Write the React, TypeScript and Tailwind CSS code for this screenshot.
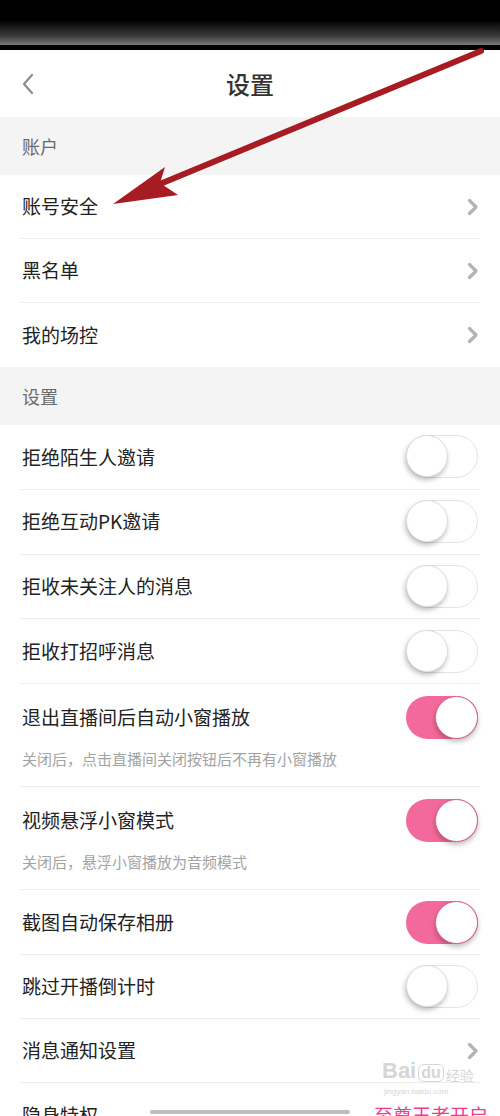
import React from 'react'

const font = { fontFamily: '"Noto Sans CJK SC", "Noto Sans", sans-serif' }

function Chevron() {
  return (
    <svg width="12" height="18" viewBox="0 0 12 18" className="mr-[1px]">
      <path d="M2.5 2.5 L9 9 L2.5 15.5" fill="none" stroke="#b3b3b3" strokeWidth="3.2" strokeLinecap="round" strokeLinejoin="round" />
    </svg>
  )
}

function Toggle({ on }: { on: boolean }) {
  if (on) {
    return (
      <div className="relative w-[72px] h-[43px] rounded-full bg-[#f4699b] mr-[2px]">
        <div className="absolute right-0 top-0 w-[43px] h-[43px] rounded-full bg-white border-[1.5px] border-[#d4638a] shadow-[0_3px_5px_rgba(0,0,0,0.25)]" />
      </div>
    )
  }
  return (
    <div className="relative w-[72px] h-[43px] rounded-full bg-white border-[1.5px] border-[#e3e3e3] mr-[2px]">
      <div className="absolute left-[-1px] top-[-1px] w-[42px] h-[42px] rounded-full bg-white border border-[#dedede] shadow-[-1px_3px_5px_rgba(0,0,0,0.25)]" />
    </div>
  )
}

type Item = { label: string; right?: 'chevron' | 'on' | 'off'; sub?: string; h?: string }

function Row({ item, last }: { item: Item; last?: boolean }) {
  return (
    <div className="px-[20px] bg-white">
      <div className={`${last ? '' : 'border-b border-[#ededed]'}`}>
        <div className={`flex items-center justify-between ${item.h ?? 'h-[63px]'}`}>
          <span className="text-[19px] text-[#222] pl-[2px]">{item.label}</span>
          {item.right === 'chevron' && <Chevron />}
          {item.right === 'on' && <Toggle on />}
          {item.right === 'off' && <Toggle on={false} />}
        </div>
        {item.sub && (
          <div className="text-[15px] text-[#a3a3a3] pl-[2px] pb-[14px] -mt-[4px] leading-[26px]">{item.sub}</div>
        )}
      </div>
    </div>
  )
}

function SectionHeader({ title }: { title: string }) {
  return (
    <div className="h-[58px] bg-[#f5f4f5] flex items-center px-[22px]">
      <span className="text-[18px] text-[#6a6a6a]">{title}</span>
    </div>
  )
}

const account: Item[] = [
  { label: '账号安全', right: 'chevron' },
  { label: '黑名单', right: 'chevron' },
  { label: '我的场控', right: 'chevron', h: 'h-[64px]' },
]

const settings: Item[] = [
  { label: '拒绝陌生人邀请', right: 'off', h: 'h-[63.75px]' },
  { label: '拒绝互动PK邀请', right: 'off', h: 'h-[63.75px]' },
  { label: '拒收未关注人的消息', right: 'off', h: 'h-[63.75px]' },
  { label: '拒收打招呼消息', right: 'off', h: 'h-[63.75px]' },
  { label: '退出直播间后自动小窗播放', right: 'on', sub: '关闭后，点击直播间关闭按钮后不再有小窗播放', h: 'h-[66px]' },
  { label: '视频悬浮小窗模式', right: 'on', sub: '关闭后，悬浮小窗播放为音频模式', h: 'h-[66px]' },
  { label: '截图自动保存相册', right: 'on', h: 'h-[64px]' },
  { label: '跳过开播倒计时', right: 'off' },
  { label: '消息通知设置', right: 'chevron' },
]

export default function App() {
  return (
    <div className="relative w-[500px] h-[1116px] overflow-hidden bg-white" style={font}>
      {/* blurred status area */}
      <div className="h-[50px] bg-black flex flex-col">
        <div className="h-[45px] bg-[linear-gradient(to_bottom,#000_0%,#000_45%,#3a3a3a_80%,#7a7a7a_100%)]" />
        <div className="h-[5px] bg-black" />
      </div>

      {/* nav bar */}
      <div className="relative h-[67px] flex items-center justify-center bg-white">
        <svg width="14" height="22" viewBox="0 0 14 22" className="absolute left-[21px] top-[23px]">
          <path d="M11 2 L3 11 L11 20" fill="none" stroke="#8c8c8c" strokeWidth="2.2" strokeLinecap="round" strokeLinejoin="round" />
        </svg>
        <span className="text-[24px] text-[#333] font-medium">设置</span>
      </div>

      <SectionHeader title="账户" />
      {account.map((it, i) => (
        <Row key={it.label} item={it} last={i === account.length - 1} />
      ))}

      <SectionHeader title="设置" />
      {settings.map((it) => (
        <Row key={it.label} item={it} />
      ))}

      <div className="px-[22px] flex items-start justify-between h-[40px] pt-[18px] bg-white">
        <span className="text-[19px] text-[#222]">隐身特权</span>
        <span className="text-[19px] text-[#e8408a] mr-[-10px]">至尊王者开启</span>
      </div>

      {/* home indicator */}
      <div className="absolute left-[150px] top-[1110px] w-[200px] h-[4px] rounded-full bg-[#bdbdbd]" />

      {/* baidu watermark */}
      <div className="absolute left-[382px] top-[1060px] text-[#d6d6d6] leading-none select-none">
        <div className="flex items-end gap-[2px]">
          <span className="text-[22px] font-bold" style={{ fontFamily: '"Liberation Sans", sans-serif' }}>Bai</span>
          <span className="text-[16px] font-bold border border-[#d6d6d6] rounded-[6px] px-[2px]" style={{ fontFamily: '"Liberation Sans", sans-serif' }}>du</span>
          <span className="text-[14px]">经验</span>
        </div>
        <div className="text-[8px] mt-[6px] ml-[2px]" style={{ fontFamily: '"Liberation Sans", sans-serif' }}>jingyan.baidu.com</div>
      </div>

      {/* red annotation arrow */}
      <svg className="absolute left-0 top-0 pointer-events-none" width="500" height="260" viewBox="0 0 500 260">
        <line x1="481" y1="51" x2="160" y2="184" stroke="#a71b22" strokeWidth="6" strokeLinecap="round" />
        <polygon points="113,204 165,167 160,183 178,195" fill="#a71b22" />
      </svg>
    </div>
  )
}
